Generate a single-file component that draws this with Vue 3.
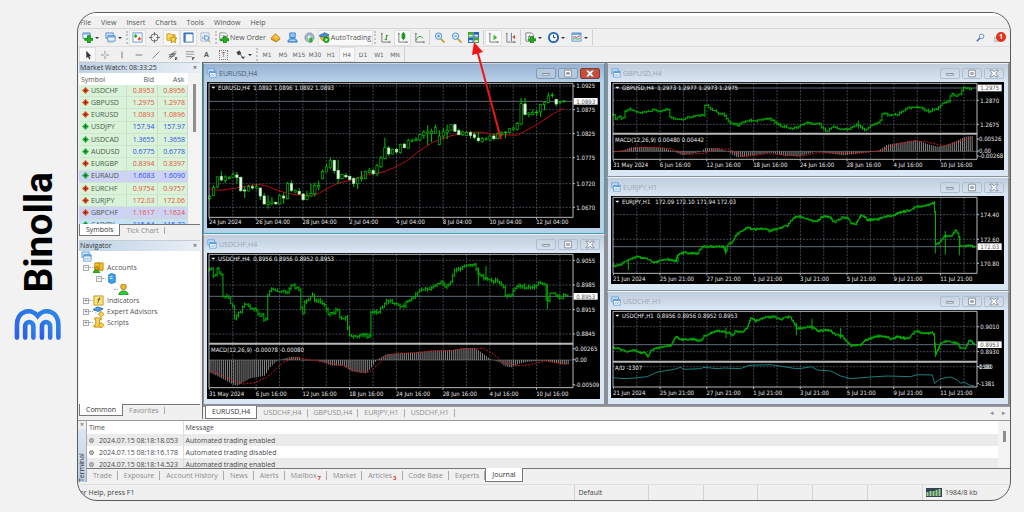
<script setup>
import { h } from 'vue'

/* ---------- icons: [path, fill, stroke] on a 12 x 12 grid ---------- */
const G = '#22b422'
const icons = {
  newChart: [['M1 1h8v6H1z', '#fff', '#5b8fd0'], ['M1 1h8v2H1z', '#7fb0e6', 'none'], ['M6 4h3v3h3v2H9v3H6V9H3V7h3z', G, '#128a12']],
  profiles: [['M1 1h8v6H1z', '#cfe2f7', '#5b8fd0'], ['M3 4h8v6H3z', '#eaf3fc', '#5b8fd0'], ['M3 4h8v2H3z', '#6aa3e0', 'none'], ['M2 11h7', 'none', '#9bb']],
  market: [['M1 1h10v10H1z', '#fff', '#5b8fd0'], ['M4 2l2 2.500-2 2-2-2z', '#16b016', 'none'], ['M8 5l2 2.500-2 2-2-2z', '#f04a2a', 'none']],
  target: [['M6 2a4 4 0 1 1 0 8a4 4 0 1 1 0-8z', 'none', '#666'], ['M6 0v4M6 8v4M0 6h4M8 6h4', 'none', '#666']],
  navigator: [['M1 2h4l1 1h4v6H1z', '#ffd860', '#c79a20'], ['M8 4l1 2.500 3 .2-2.200 2 .7 3L8 10.200 5.500 11.700l.7-3L4 6.700l3-.2z', '#ffe04a', '#b98a10']],
  terminal: [['M1 1h10v10H1z', '#fff', '#3f78c4'], ['M1 1h2v10H1z', '#3f78c4', 'none'], ['M1 1h10v1.500H1z', '#3f78c4', 'none']],
  tester: [['M1 1h9v9H1z', '#eef3f8', '#a9b8c8'], ['M3 8V5M5 8V3M7 8V5', 'none', '#7d9ac0'], ['M7 4a2.500 2.500 0 1 1 0 5a2.500 2.500 0 1 1 0-5z', '#cfe6fb', '#5b8fd0'], ['M9 9l2.500 2.500', 'none', '#c79a20']],
  order: [['M2 1h6l2 2v6H2z', '#fff', '#8a8a8a'], ['M4 4h4M4 6h3', 'none', '#999'], ['M6 5h3v2.500h3v2H9V12H6V9.500H3v-2h3z', G, '#128a12']],
  gold: [['M1 7l5-5 5 5-4 3z', '#f3b52c', '#b67a10'], ['M1 7l6 3v1.500L1 8.500zM11 7v1.500L7 11.500', '#c88718', 'none'], ['M5 4l4 3', 'none', '#ffe9a0']],
  user: [['M3 1h6v5H3z', '#8fc4f5', '#3b84cf'], ['M1 11c0-3 2-4 5-4s5 1 5 4z', '#5aa7ee', '#2f74bd'], ['M3 9h6', 'none', '#d8ecff']],
  signal: [['M6 1a5 5 0 1 1 0 10a5 5 0 1 1 0-10z', '#b8c2cc', '#8793a0'], ['M6 3a3 3 0 1 1 0 6a3 3 0 1 1 0-6z', '#e8eef4', '#6f8fb5'], ['M6 6h3v5.500H6z', G, 'none']],
  auto: [['M1 5l5-4 5 4-2 4H3z', '#f1c232', '#b98a10'], ['M0 4l6-3 5 2-5 3z', '#4a90d9', '#2f6cb0'], ['M8 5.500a3 3 0 1 1 0 6a3 3 0 1 1 0-6z', G, '#0c8a0c'], ['M7 7l3 1.500-3 1.500z', '#fff', 'none']],
  bars: [['M2 1v10h10M1 2h2M10 10v2', 'none', '#777'], ['M7 3v6M7 4h2M5 8h2', 'none', '#1c9a1c']],
  candles: [['M2 1v10h10M1 2h2M10 10v2', 'none', '#777'], ['M7 0v9M5.500 2h3v5h-3z', '#2fd02f', '#118811']],
  line: [['M2 1v10h10M1 2h2M10 10v2', 'none', '#777'], ['M2 9l3-4 3 0 2 2', 'none', '#2f9a4a']],
  zoomIn: [['M7.500 7.500l4 4', 'none', '#d2a020', 2], ['M5 1a3.500 3.500 0 1 1 0 7a3.500 3.500 0 1 1 0-7z', '#dceefb', '#3f86d0'], ['M5 3v3M3.500 4.500h3', 'none', '#3f86d0']],
  zoomOut: [['M7.500 7.500l4 4', 'none', '#d2a020', 2], ['M5 1a3.500 3.500 0 1 1 0 7a3.500 3.500 0 1 1 0-7z', '#dceefb', '#3f86d0'], ['M3.500 4.500h3', 'none', '#3f86d0']],
  tile: [['M0 0h6v6H0zM6 6h6v6H6z', '#3fa82a', 'none'], ['M6 0h6v6H6zM0 6h6v6H0z', '#2a62c8', 'none'], ['M1 3h4v2H1zM7 3h4v2H7zM1 9h4v2H1zM7 9h4v2H7z', '#e8f4e8', 'none']],
  scroll: [['M2 1v10h10M1 2h2M10 10v2', 'none', '#777'], ['M6 3l4 3-4 3z', '#2fb82f', 'none']],
  shift: [['M2 1v10h10M1 2h2M10 10v2', 'none', '#777'], ['M7 1v9', 'none', '#3f6fb0'], ['M11 3v5L8 5.500z', '#d0481c', 'none']],
  indicator: [['M1 1h6l2 2v7H1z', '#fff', '#777'], ['M3 8c2-1 1-5 3-5M3 5h3', 'none', '#777'], ['M6 5h3v2.500h3v2H9V12H6V9.500H4v-2h2z', G, '#128a12']],
  clock: [['M6 1a5 5 0 1 1 0 10a5 5 0 1 1 0-10z', '#f4faff', '#1d5fb5', 2], ['M6 3v3h2', 'none', '#333']],
  template: [['M1 1h10v9H1z', '#dfeaf7', '#6a93c4'], ['M1 1h10v2H1z', '#6a9bd8', 'none'], ['M2 6l2-1 2 1 4-2', 'none', '#d04a3a'], ['M2 8l3-1 2 1 3-1', 'none', '#3fa84a']],
  cursor: [['M4 1v9l2-2 1.500 3.500 1.500-.7L7.500 7.500H10z', '#333', 'none']],
  cross: [['M6 1v4M6 7v4M1 6h4M7 6h4', 'none', '#888']],
  vline: [['M6 2v8', 'none', '#666']],
  hline: [['M2 6h8', 'none', '#666']],
  trend: [['M2 10l8-8', 'none', '#666']],
  channel: [['M1 9l8-8M2 11l8-8M1 6l6-1M4 4l5 1M2 8l6-1', 'none', '#555'], ['M11 9H9v3h2M9 10.500h2', 'none', '#444']],
  fibo: [['M1 2h10M1 5h10M1 8h7', 'none', '#888'], ['M9 12V9h2.500M9 10.500h2', 'none', '#444']],
  arrows: [['M1 3l3-2 2 3-3 2z', '#444', '#444'], ['M5 5l3 4', 'none', '#444'], ['M6 8h5l-2.500 3z', '#444', 'none']],
  chart: [['M1 1h8v6H1z', '#cfe2f7', '#5b9be0'], ['M3 4h8v7H3z', '#fff', '#5b9be0'], ['M3 4h8v2H3z', '#5b9be0', 'none'], ['M4 9l2-1 2 1 2-2', 'none', '#5b9be0']],
  accounts: [['M2 1h9v8H2z', '#f2c12a', '#b98a10'], ['M5 1h2v8', 'none', '#b98a10'], ['M4 5a2 2 0 1 1 0 4a2 2 0 1 1 0-4z', '#e8a020', '#9a6a10'], ['M0 12c0-4 7-4 7 0z', '#2fc02f', '#128a12']],
  server: [['M3 2l3-1.500 4 1.500v8l-4 1.500-3-1.500z', '#3fa0ec', '#1f78c8'], ['M4 4h3M4 6h3', 'none', '#d8efff']],
  person: [['M6 0a3 3 0 1 1 0 6a3 3 0 1 1 0-6z', '#f0bc30', '#a07010'], ['M1 12c0-6 10-6 10 0z', '#2fd02f', '#128a12']],
  func: [['M1 1h10v10H1z', '#ffe476', '#b9962a'], ['M5 9l2-6h1M5 5h3', 'none', '#555']],
  expert: [['M0 4l5-3 6 2-5 3z', '#4a9ad9', '#2f6cb0'], ['M2 6c2 3 6 2 7-1v3H3z', '#4a9ad9', 'none'], ['M9 6l3 3-3 3-3-3z', '#ffd83a', '#b98a10']],
  script: [['M2 1h7v2H7v6h2v2H1V9h2V3H2z', '#ffd860', '#b98a10'], ['M9 6l3 3-3 3-3-3z', '#ffd83a', '#b98a10']],
  search: [['M5 7l-4 4', 'none', '#3f68b8', 2], ['M7.500 1.500a3 3 0 1 1 0 6a3 3 0 1 1 0-6z', '#f4f8ff', '#3f68b8']],
}
const Icon = (p) =>
  h('svg', { viewBox: '0 0 12 12', class: 'icon', 'aria-hidden': 'true' },
    icons[p.name].map(([d, fill, stroke, w]) => h('path', { d, fill, stroke, 'stroke-width': w || 1 })))
Icon.props = ['name']

const menus = ['File', 'View', 'Insert', 'Charts', 'Tools', 'Window', 'Help']
const toolbar = [
  { i: 'newChart', t: 'New chart', c: 1 }, { i: 'profiles', t: 'Profiles', c: 1 }, { grip: 1 },
  { i: 'market', t: 'Market Watch', on: 1 }, { i: 'target', t: 'Data Window' }, { i: 'navigator', t: 'Navigator', on: 1 },
  { i: 'terminal', t: 'Terminal', on: 1 }, { i: 'tester', t: 'Strategy Tester' }, { grip: 1 },
  { i: 'order', t: 'New Order', label: 'New Order' }, { i: 'gold', t: 'MetaEditor' }, { i: 'user', t: 'Community' },
  { i: 'signal', t: 'Signals' }, { i: 'auto', t: 'AutoTrading', label: 'AutoTrading', on: 1 }, { grip: 1 },
  { i: 'bars', t: 'Bar chart' }, { i: 'candles', t: 'Candlesticks', on: 1 }, { i: 'line', t: 'Line chart' }, { sep: 1 },
  { i: 'zoomIn', t: 'Zoom in' }, { i: 'zoomOut', t: 'Zoom out' }, { i: 'tile', t: 'Tile windows' }, { sep: 1 },
  { i: 'scroll', t: 'Auto scroll', on: 1 }, { i: 'shift', t: 'Chart shift' }, { sep: 1 },
  { i: 'indicator', t: 'Indicators', c: 1 }, { i: 'clock', t: 'Periods', c: 1 }, { i: 'template', t: 'Templates', c: 1 }, { sep: 1 },
]
const drawTools = [
  { i: 'cursor', t: 'Cursor', on: 1 }, { i: 'cross', t: 'Crosshair' }, { i: 'vline', t: 'Vertical line' },
  { i: 'hline', t: 'Horizontal line' }, { i: 'trend', t: 'Trendline' }, { i: 'channel', t: 'Channel' }, { i: 'fibo', t: 'Fibonacci' },
]
const frames = ['M1', 'M5', 'M15', 'M30', 'H1', 'H4', 'D1', 'W1', 'MN']

const quotes = [
  ['USDCHF', '0.8953', '0.8956', 'down'], ['GBPUSD', '1.2975', '1.2978', 'down'], ['EURUSD', '1.0893', '1.0896', 'down'],
  ['USDJPY', '157.94', '157.97', 'up'], ['USDCAD', '1.3655', '1.3658', 'up'], ['AUDUSD', '0.6775', '0.6778', 'up'],
  ['EURGBP', '0.8394', '0.8397', 'down'], ['EURAUD', '1.6083', '1.6090', 'up', 'violet'], ['EURCHF', '0.9754', '0.9757', 'down'],
  ['EURJPY', '172.03', '172.06', 'down'], ['GBPCHF', '1.1617', '1.1624', 'down', 'violet'], ['CADJPY', '115.64', '115.73', 'up', 'sky'],
]
const tree = [
  { i: 'chart', level: 0 }, { i: 'accounts', t: 'Accounts', level: 1, b: '-' }, { i: 'server', level: 2, b: '-' },
  { i: 'person', level: 3 }, { i: 'func', t: 'Indicators', level: 1, b: '+' },
  { i: 'expert', t: 'Expert Advisors', level: 1, b: '+' }, { i: 'script', t: 'Scripts', level: 1, b: '+' },
]
const logs = [
  ['2024.07.15 08:18:18.053', 'Automated trading enabled'],
  ['2024.07.15 08:18:16.178', 'Automated trading disabled'],
  ['2024.07.15 08:18:14.523', 'Automated trading enabled'],
]
const termTabs = [['Trade'], ['Exposure'], ['Account History'], ['News'], ['Alerts'], ['Mailbox', 7], ['Market'], ['Articles', 3], ['Code Base'], ['Experts'], ['Journal']]
const chartTabs = ['EURUSD,H4', 'USDCHF,H4', 'GBPUSD,H4', 'EURJPY,H1', 'USDCHF,H1']

/* ---------- chart geometry ---------- */
const pairs = (s) => s.trim().split(/\s+/).map((p) => p.split(',').map(Number))
const at = (pts, x) => {
  for (let i = 1; i < pts.length; i++) {
    if (x <= pts[i][0]) {
      const [x0, y0] = pts[i - 1]
      const [x1, y1] = pts[i]
      return y0 + ((x - x0) / (x1 - x0 || 1)) * (y1 - y0)
    }
  }
  return pts[pts.length - 1][1]
}
const random = (seed) => () => ((seed = (seed * 16807) % 2147483647) / 2147483647)
function priceBars(src, step, noise, extra = '') {
  const pts = pairs(src)
  const rnd = random(911)
  let prev = pts[0][1]
  let d = ''
  for (let x = pts[0][0]; x <= pts[pts.length - 1][0]; x += step) {
    const y = at(pts, x) + (rnd() - 0.5) * noise
    const hi = Math.min(prev, y) - rnd() * noise
    const lo = Math.max(prev, y) + rnd() * noise
    d += `M${x.toFixed(1)} ${hi.toFixed(1)}V${lo.toFixed(1)}M${(x - step / 2).toFixed(1)} ${prev.toFixed(1)}H${x.toFixed(1)}M${x.toFixed(1)} ${y.toFixed(1)}h${step / 2}`
    prev = y
  }
  return d + extra
}
function histogram(src, base) {
  const pts = pairs(src)
  let d = ''
  for (let x = 30; x <= 1106; x += 5.84) d += `M${x.toFixed(1)} ${base}V${at(pts, x).toFixed(1)}`
  return d
}

const candleSrc = `400,402,410,415u 370,376,400,402u 343,345,375,378u 327,343,354,358d 340,345,356,363u 342,346,350,352u 330,338,346,348u 330,339,346,364d
343,346,386,390d 372,384,387,408d 368,374,387,388u 367,374,378,383d 366,374,378,382u 377,378,402,414d 393,402,426,427d 400,420,428,440u
405,420,424,430u 418,421,426,426d 398,401,426,428u 392,402,408,425d 360,364,410,412u 355,365,385,390d 383,385,390,392u 378,388,396,400d
393,396,413,416d 386,402,412,415u 365,394,402,404u 362,370,395,404u 356,370,375,385u 322,328,350,352u 305,315,330,332u 286,295,316,322u
293,295,326,335d 293,325,350,365d 335,337,350,352u 333,340,345,347d 340,343,352,356d 345,350,364,375d 345,348,364,381u 327,346,350,358u
326,328,350,352u 318,325,332,334u 320,326,335,340d 305,311,335,343u 282,288,314,318u 227,257,290,292u 252,258,276,282d 260,262,276,277u
258,262,270,275d 245,247,272,275u 245,246,257,260d 230,236,258,260u 230,236,238,240u 225,232,236,238u 215,217,234,236u 205,210,220,230u
190,210,214,250u 200,208,214,240u 188,196,214,215u 205,222,248,250u 198,210,222,232u 188,205,212,232u 187,188,204,206u 185,188,208,210d
200,206,218,220d 206,210,218,222u 208,212,220,222u 206,212,220,230d 210,218,226,232d 210,228,236,242d 225,230,238,242u 226,230,233,236u
220,222,234,236u 215,222,230,236d 212,216,230,232u 208,212,216,222u 208,210,212,228u 198,200,212,214u 194,198,202,205u 180,184,202,206u
108,125,186,190u 108,126,157,160d 150,153,158,166u 143,152,158,160u 145,150,152,162u 125,128,150,165u 118,122,128,145u 92,102,122,124u
92,99,101,108u 110,112,126,134d 118,119,122,126u 114,117,119,122u`
const candles = candleSrc.split(/\s+/).map((s, i) => {
  const [hi, top, bot, lo] = s.slice(0, -1).split(',').map(Number)
  return { x: 29 + i * 11.68, hi, top, bot, lo, down: s.endsWith('d') }
})

const h4Dates = ['31 May 2024', '6 Jun 16:00', '12 Jun 16:00', '18 Jun 16:00', '24 Jun 16:00', '28 Jun 16:00', '4 Jul 16:00', '10 Jul 16:00']
const h1Dates = ['21 Jun 2024', '25 Jun 21:00', '27 Jun 21:00', '1 Jul 21:00', '3 Jul 21:00', '5 Jul 21:00', '9 Jul 21:00', '11 Jul 21:00']
const gridX = Array.from({ length: 15 }, (_, i) => 98.5 + i * 70.1)

const windows = [
  [
    {
      name: 'EURUSD,H4', ohlc: '1.0892 1.0896 1.0892 1.0893', ohlcX: 160, active: true, y0: 60, h: 438, top: 64, bottom: 466, dateY: 487,
      dates: ['24 Jun 2024', '26 Jun 04:00', '28 Jun 04:00', '2 Jul 04:00', '4 Jul 04:00', '8 Jul 04:00', '10 Jul 04:00', '12 Jul 04:00'],
      rows: [[72, '1.0925'], [143, '1.0875'], [215, '1.0825'], [287, '1.0775'], [365, '1.0720'], [436, '1.0670']],
      price: [118, '1.0893'], candles,
      ma: '28,381 60,385 98,380 140,372 175,367 200,372 240,388 280,397 330,401 355,395 385,378 415,363 450,355 500,338 550,330 580,318 618,298 660,265 700,240 750,222 800,212 840,210 880,217 950,220 970,210 1010,188 1060,155 1091,139',
    },
    {
      name: 'USDCHF,H4', ohlc: '0.8956 0.8956 0.8952 0.8953', ohlcX: 160, y0: 57, h: 438, top: 61, bottom: 461, split: 329, dateY: 485, dates: h4Dates,
      rows: [[79, '0.9055'], [153, '0.8985'], [227, '0.8915'], [300, '0.8845']], price: [187, '0.8953'],
      sub: 'MACD(12,26,9) -0.00078 -0.00080', subY: 353, subRows: [[344, '0.00265'], [377, '0.00'], [452, '-0.00509']], base: 378,
      bars: priceBars('28,110 34,100 40,125 46,122 52,105 58,120 64,125 66,185 84,185 90,210 98,215 100,245 105,255 112,240 122,235 130,215 138,208 146,222 155,225 162,225 170,230 176,250 184,240 192,255 198,250 200,190 206,175 214,165 226,170 240,170 262,172 276,152 286,160 298,165 304,240 308,240 312,205 330,190 338,180 346,205 360,200 370,210 378,225 384,240 398,238 412,225 420,250 428,255 438,250 446,300 456,310 480,302 508,308 510,235 530,232 545,225 558,200 575,205 590,208 598,215 610,220 622,200 640,190 655,175 665,165 690,168 705,150 725,145 735,158 755,140 765,105 785,100 800,92 825,95 835,125 850,130 870,140 890,140 908,155 915,185 930,185 945,165 960,155 985,162 1000,160 1015,145 1035,150 1040,210 1045,200 1050,180 1070,180 1082,195 1095,180 1105,185', 5.84, 8, 'M858 96V135M835 100V155M1042 150V226'),
      hist: histogram('28,415 50,425 70,435 100,452 112,455 130,445 150,433 180,428 195,425 210,400 230,382 245,376 275,368 300,370 305,380 350,378 395,395 430,395 455,412 500,418 515,400 530,378 560,360 600,358 650,355 700,350 760,348 790,342 825,342 845,355 870,375 900,385 915,397 935,400 960,388 985,383 1035,380 1060,385 1090,392 1105,390', 378),
      signal: '28,408 60,422 100,440 130,450 160,447 200,430 220,413 250,385 290,370 330,378 370,383 430,395 480,415 510,413 530,395 560,367 590,358 640,357 700,350 750,350 800,343 850,343 880,360 910,385 950,395 985,393 1035,381 1070,386 1105,391',
    },
  ],
  [
    {
      name: 'GBPUSD,H4', ohlc: '1.2973 1.2977 1.2973 1.2975', ohlcX: 160, y0: 60, h: 264, top: 64, bottom: 292, split: 215, dateY: 315, dates: h4Dates,
      rows: [[115, '1.2870'], [187, '1.2675']], price: [78, '1.2975'],
      sub: 'MACD(12,26,9) 0.00480 0.00442', subY: 239, subRows: [[231, '0.00526'], [267, '0.00'], [282, '-0.00268']], base: 268,
      bars: priceBars('28,160 34,170 44,160 54,178 62,150 74,138 88,148 110,152 130,150 150,143 165,150 192,140 198,165 215,172 235,172 250,165 270,162 298,158 304,122 315,138 330,145 345,155 362,160 374,182 390,186 405,190 415,180 440,174 455,178 475,170 500,172 518,185 535,192 555,200 575,198 585,190 605,182 620,185 645,184 655,200 668,208 685,195 705,200 730,203 745,192 765,190 785,205 800,188 825,183 835,155 860,160 885,155 905,140 930,135 945,138 975,148 1000,140 1012,125 1035,115 1040,92 1055,105 1065,98 1078,75 1090,80 1105,80', 5.84, 5, 'M763 175V200'),
      hist: histogram('28,270 60,265 80,256 120,254 180,258 205,266 235,280 290,270 305,258 340,258 370,268 400,286 430,282 500,272 545,282 590,282 640,268 660,272 720,280 780,272 820,268 850,248 900,240 935,234 970,246 1000,254 1030,248 1060,236 1085,224 1105,222', 268),
      signal: '28,270 70,265 100,257 150,256 200,260 250,277 300,274 340,260 375,262 420,284 490,275 540,278 590,284 640,272 720,274 780,272 830,266 870,248 930,237 970,240 1020,252 1060,240 1105,226',
    },
    {
      name: 'EURJPY,H1', ohlc: '172.09 172.10 171.94 172.03', ohlcX: 154, y0: 60, h: 264, top: 64, bottom: 292, dateY: 315, dates: h1Dates,
      rows: [[116, '174.40'], [190, '172.60'], [262, '170.80']], price: [212, '172.03'],
      bars: priceBars('28,270 45,268 65,255 73,252 98,242 115,245 135,250 150,260 170,252 190,250 215,255 222,235 240,228 255,232 280,232 295,212 330,212 355,212 365,230 370,205 382,200 400,172 430,155 445,160 480,158 495,165 520,158 550,148 570,122 590,122 610,130 635,138 655,122 675,122 690,140 715,125 730,125 740,142 755,145 770,115 790,132 820,130 840,122 865,118 890,108 920,102 935,92 960,90 985,82 991,80 994,205 1005,200 1020,180 1040,180 1055,162 1064,178 1068,212 1095,208 1112,215', 2.92, 4, 'M73 252V283M365 212V236M994 200V232M1024 165V236M1066 180V238M222 235V260'),
    },
    {
      name: 'USDCHF,H1', ohlc: '0.8956 0.8956 0.8952 0.8953', ohlcX: 158, y0: 402, h: 264, top: 406, bottom: 633, split: 557, dateY: 656, dates: h1Dates,
      rows: [[452, '0.9010'], [527, '0.8930']], price: [506, '0.8953'],
      sub: 'A/D -1307', subY: 581, subRows: [[572, '1580'], [572, '0.00'], [622, '-1381']], subGrid: 572,
      bars: priceBars('28,515 50,520 70,528 90,522 105,530 120,528 130,542 140,522 160,515 200,508 215,482 228,490 270,490 290,495 300,480 335,465 375,470 385,478 395,465 415,468 430,455 440,425 455,435 480,425 510,422 530,430 555,420 570,440 578,458 600,455 622,452 640,465 675,462 690,475 715,482 740,510 770,505 785,492 820,480 845,482 860,488 880,482 910,488 935,465 960,472 988,470 994,535 1010,500 1030,495 1060,502 1070,518 1085,515 1095,492 1112,508', 2.92, 4, 'M624 428V462M577 440V478M710 456V488M366 455V486M994 500V543'),
      ad: '28,605 60,608 90,606 130,602 160,588 210,580 230,574 240,580 290,578 300,574 340,578 360,576 410,578 435,568 500,566 540,572 575,578 600,576 622,572 640,582 680,585 710,600 740,608 800,603 850,600 920,602 940,596 985,597 992,622 1010,608 1040,603 1060,612 1070,622 1080,618 1095,627 1112,630',
    },
  ],
]
</script>

<template>
  <div class="page">
    <div class="brand">
      <span class="brand-name">Binolla</span>
      <svg class="brand-mark" viewBox="40 447 146 96" aria-hidden="true">
        <defs>
          <linearGradient id="mark" x1="0" y1="1" x2="1" y2="0">
            <stop offset="0" stop-color="#2f5fe8" />
            <stop offset="1" stop-color="#2b86e6" />
          </linearGradient>
        </defs>
        <g fill="none" stroke="url(#mark)" stroke-width="14" stroke-linecap="round">
          <path d="M49 534V496C49 452 92 442 112 468C132 442 175 452 175 496V534" />
          <path d="M74 534V500C74 482 99 482 99 500V534" />
          <path d="M125 534V500C125 482 150 482 150 500V534" />
        </g>
      </svg>
    </div>

    <main class="frame">
      <nav class="menubar">
        <button v-for="m in menus" :key="m" type="button">{{ m }}</button>
      </nav>

      <div class="toolbar main-tools">
        <template v-for="(b, n) in toolbar" :key="n">
          <i v-if="b.grip" class="grip"></i>
          <i v-else-if="b.sep" class="sep"></i>
          <button v-else type="button" class="tool" :class="{ on: b.on, wide: b.c, labelled: b.label }" :aria-label="b.t">
            <Icon :name="b.i" /><span v-if="b.label">{{ b.label }}</span><i v-if="b.c" class="caret"></i>
          </button>
        </template>
        <div class="tool-end">
          <button type="button" class="tool" aria-label="Search"><Icon name="search" /></button>
          <button type="button" class="tool bell" aria-label="Notifications">
            <svg class="icon" viewBox="0 0 12 12" aria-hidden="true"><path d="M0 6h8v5H5l-2 1v-1H0z" fill="#ddd" stroke="#aaa" /></svg>
            <b>1</b>
          </button>
        </div>
      </div>

      <div class="toolbar draw-tools">
        <button v-for="b in drawTools" :key="b.i" type="button" class="tool" :class="{ on: b.on }" :aria-label="b.t"><Icon :name="b.i" /></button>
        <button type="button" class="tool letter">A</button>
        <button type="button" class="tool letter"><span class="boxed">T</span></button>
        <button type="button" class="tool wide" aria-label="Arrows"><Icon name="arrows" /><i class="caret"></i></button>
        <i class="grip"></i>
        <button v-for="f in frames" :key="f" type="button" class="tool period" :class="{ on: f === 'H4' }">{{ f }}</button>
        <i class="sep"></i>
      </div>

      <div class="body">
        <aside class="side">
          <section class="panel">
            <header class="panel-title"><span>Market Watch: 08:33:25</span><button type="button" aria-label="Close Market Watch">×</button></header>
            <div class="quotes">
              <div class="quote-clip">
                <table class="quote-table">
                  <thead><tr><th>Symbol</th><th>Bid</th><th>Ask</th></tr></thead>
                  <tbody>
                    <tr v-for="q in quotes" :key="q[0]" :class="[q[3], q[4]]">
                      <td>
                        <svg viewBox="0 0 8 8" class="dir" aria-hidden="true"><path d="M4 0l4 4-4 4-4-4z" /><path d="M4 2v4M2 4h4" class="plus" /></svg>{{ q[0] }}
                      </td>
                      <td>{{ q[1] }}</td><td>{{ q[2] }}</td>
                    </tr>
                  </tbody>
                </table>
              </div>
              <div class="track"><i></i></div>
            </div>
            <div class="tabs"><button type="button" class="on">Symbols</button><button type="button">Tick Chart</button></div>
          </section>
          <section class="panel nav-panel">
            <header class="panel-title"><span>Navigator</span><button type="button" aria-label="Close Navigator">×</button></header>
            <ul class="tree">
              <li v-for="t in tree" :key="t.i" :class="'level' + t.level">
                <i v-if="t.b" class="expander">{{ t.b === '+' ? '+' : '−' }}</i><i v-if="t.level" class="branch"></i><Icon :name="t.i" /><span>{{ t.t }}</span>
              </li>
            </ul>
            <div class="tabs"><button type="button" class="on">Common</button><button type="button">Favorites</button></div>
          </section>
        </aside>

        <div class="workspace">
          <div class="mdi">
            <div v-for="(col, c) in windows" :key="c" class="mdi-col">
              <section v-for="w in col" :key="w.name" class="win" :class="{ active: w.active }">
                <header>
                  <Icon name="chart" /><h2>{{ w.name }}</h2>
                  <button type="button" aria-label="Minimize"><svg viewBox="0 0 12 8"><path d="M2 4h8v2H2z" /></svg></button>
                  <button type="button" aria-label="Maximize"><svg viewBox="0 0 12 8"><path d="M2 0h8v8H2zM4.500 3h3v2h-3z" fill-rule="evenodd" /></svg></button>
                  <button type="button" class="close" aria-label="Close"><svg viewBox="0 0 12 8"><path d="M1 0h3l2 2 2-2h3L8 4l3 4H8L6 6 4 8H1l3-4z" /></svg></button>
                </header>
                <svg class="plot" :viewBox="`21 ${w.y0} 1179 ${w.h}`" role="img" :aria-label="w.name + ' chart'">
                  <rect x="21" :y="w.y0" width="1179" :height="w.h" fill="#000" />
                  <g class="grid">
                    <path v-for="x in gridX" :key="x" :d="`M${x} ${w.top}V${w.bottom}`" />
                    <path v-for="r in w.rows" :key="r[1]" :d="`M27 ${r[0]}H1119`" />
                    <path v-if="w.subGrid" :d="`M27 ${w.subGrid}H1119`" />
                  </g>
                  <path class="price-line" :d="`M27 ${w.price[0]}H1119`" />
                  <path v-if="w.base" class="base" :d="`M27 ${w.base}H1119`" />
                  <path v-if="w.hist" class="hist" :d="w.hist" />
                  <polyline v-if="w.signal" class="signal" :points="w.signal" />
                  <polyline v-if="w.ad" class="ad" :points="w.ad" />
                  <polyline v-if="w.ma" class="ma" :points="w.ma" />
                  <path v-if="w.bars" class="bars" :d="w.bars" />
                  <g v-for="k in w.candles || []" :key="k.x" class="candle" :class="{ down: k.down }">
                    <path :d="`M${k.x} ${k.hi}V${k.lo}`" />
                    <rect :x="k.x - 3.5" :y="k.top" width="7" :height="k.bot - k.top" />
                  </g>
                  <path class="edge" :d="`M27 ${w.top}H1119V${w.bottom}H27z`" />
                  <path v-if="w.split" class="split" :d="`M27 ${w.split}H1119`" />
                  <path class="edge" :d="[...w.rows, ...(w.subRows || [])].map((r) => `M1119 ${r[0]}h6`).join('')" />
                  <path class="edge" :d="w.dates.map((d, n) => `M${28 + n * 140.2} ${w.bottom}v6`).join('')" />
                  <path d="M34 0h12l-6 6z" fill="#fff" :transform="`translate(0 ${w.top + 10})`" />
                  <text x="54" :y="w.top + 20">{{ w.name }}</text>
                  <text :x="w.ohlcX" :y="w.top + 20">{{ w.ohlc }}</text>
                  <text v-if="w.sub" x="33" :y="w.subY">{{ w.sub }}</text>
                  <text v-for="r in w.rows" :key="r[1]" x="1129" :y="r[0] + 7">{{ r[1] }}</text>
                  <text v-for="r in w.subRows || []" :key="r[1]" x="1125" :y="r[0] + 7">{{ r[1] }}</text>
                  <text v-for="(d, n) in w.dates" :key="d" :x="27 + n * 140.2" :y="w.dateY">{{ d }}</text>
                  <rect x="1121" :y="w.price[0] - 10" width="72" height="20" fill="#fff" />
                  <text class="price-tag" x="1129" :y="w.price[0] + 7">{{ w.price[1] }}</text>
                </svg>
              </section>
            </div>
          </div>
          <div class="tabs chart-tabs">
            <button v-for="(t, n) in chartTabs" :key="t" type="button" :class="{ on: n === 0 }">{{ t }}</button>
            <div class="tab-arrows"><button type="button" aria-label="Previous tab">◂</button><button type="button" aria-label="Next tab">▸</button></div>
          </div>
        </div>
      </div>

      <section class="terminal">
        <div class="rail"><button type="button" aria-label="Close Terminal">×</button><span>Terminal</span></div>
        <div class="terminal-main">
          <div class="log-clip">
            <table class="log">
              <thead><tr><th>Time</th><th>Message</th></tr></thead>
              <tbody>
                <tr v-for="l in logs" :key="l[0]"><td><i class="dot"></i>{{ l[0] }}</td><td>{{ l[1] }}</td></tr>
              </tbody>
            </table>
            <div class="track"><i></i></div>
          </div>
          <div class="tabs term-tabs">
            <button v-for="t in termTabs" :key="t[0]" type="button" :class="{ on: t[0] === 'Journal' }">{{ t[0] }}<sub v-if="t[1]">{{ t[1] }}</sub></button>
          </div>
        </div>
      </section>

      <footer class="status">
        <span class="help">For Help, press F1</span>
        <span class="profile">Default</span>
        <span v-for="n in 5" :key="n" class="cell"></span>
        <span class="traffic">
          <svg viewBox="0 0 16 9" aria-hidden="true"><path d="M0 0h16v9H0z" fill="#345" /><path d="M1.500 4v4M4.500 3v5M7.500 3v5M10.500 2v6M13.500 1v7" stroke="#9bd08a" stroke-width="2" /></svg>
          1984/8 kb
        </span>
      </footer>

      <svg class="pointer" viewBox="0 0 40 104" aria-hidden="true">
        <path d="M9 8L33 97" stroke="#f01414" stroke-width="2" />
        <path d="M6 0l9 10-11 3z" fill="#f01414" />
      </svg>
    </main>
  </div>
</template>

<style>
body { background: #f2f2f2; }
</style>

<style scoped>
* { box-sizing: border-box; }
button { font: inherit; color: inherit; background: none; border: 0; padding: 0; margin: 0; }
i { font-style: normal; }
.page { display: flex; min-height: 100vh; padding: 12px 13px 11px 0; background: #f2f2f2; font: 7px/11px "Open Sans", "Noto Sans", sans-serif; color: #555; }
.brand { flex: none; width: 77px; display: flex; flex-direction: column; align-items: center; padding-top: 160px; gap: 16px; }
.brand-name { writing-mode: vertical-rl; transform: rotate(180deg); font: 700 39px/44px Roboto, sans-serif; color: #000; }
.brand-mark { width: 48px; margin-right: 2px; }
.frame { position: relative; flex: 1; min-width: 0; display: flex; flex-direction: column; background: #f0f0f0; border: 1px solid #5c5c5c; border-radius: 20px; overflow: hidden; }
.icon { display: block; flex: none; width: 11px; height: 11px; }

.menubar { display: flex; gap: 10px; padding: 5px 0 0 2px; border-bottom: 1px solid #d6d6d6; box-shadow: inset 0 3px #fff; }
.menubar button { line-height: 10px; }
.toolbar { display: flex; align-items: center; }
.main-tools { height: 18px; padding-left: 1px; border-bottom: 1px solid #dedede; }
.draw-tools { height: 15px; padding-left: 1px; }
.tool { flex: none; width: 17px; height: 16px; display: flex; align-items: center; justify-content: center; }
.draw-tools .tool { height: 15px; }
.draw-tools .icon { width: 10px; height: 10px; }
.tool.on { background: #f9f9f9; border: 1px solid #e0e0e0; }
.tool.wide { width: 23px; gap: 2px; }
.tool.labelled { width: auto; gap: 1px; padding: 0 1px 0 0; }
.caret { border: 2px solid transparent; border-top-color: #333; border-bottom: 0; }
.grip { flex: none; width: 2px; height: 13px; margin: 0 1px; border-left: 2px dotted #c4c4c4; }
.sep { flex: none; width: 1px; height: 15px; margin: 0 1px; background: #d0d0d0; }
.letter { font-weight: 700; }
.boxed { border: 1px dotted #777; line-height: 8px; padding: 0 2px; font-weight: 400; }
.draw-tools .period { width: 16px; font: 6px/8px "DejaVu Sans", sans-serif; color: #666; }
.tool-end { margin-left: auto; display: flex; padding-right: 3px; gap: 1px; }
.tool-end .icon { width: 9px; height: 9px; }
.bell { position: relative; }
.bell b { position: absolute; left: 6px; top: 2px; width: 10px; height: 10px; border-radius: 50%; background: #e2321c; color: #fff; line-height: 10px; }

.body { display: flex; }
.side { flex: none; width: 124px; display: flex; flex-direction: column; gap: 4px; padding: 0 2px 3px 1px; }
.panel { display: flex; flex-direction: column; }
.nav-panel { flex: 1; }
.panel-title { display: flex; justify-content: space-between; align-items: center; height: 11px; padding: 0 3px 0 1px; background: linear-gradient(90deg, #bdd2e6, #e9eff5); color: #333; line-height: 10px; border-top: 1px solid #c4ccd4; }
.quotes { display: flex; background: #fff; height: 151px; }
.quote-clip { flex: 1; overflow: hidden; }
.quote-table { width: 109px; border-collapse: collapse; table-layout: fixed; height: 159px; }
.quote-table th { font-weight: 400; text-align: right; padding: 0 3px 0 2px; height: 12px; color: #555; }
.quote-table th:first-child { text-align: left; width: 47px; }
.quote-table th:nth-child(2) { width: 31px; }
.quote-table td { padding: 0 2px; text-align: right; background: #d8f3d8; border-bottom: 1px solid #cfe4cf; border-right: 1px solid #cbdccb; line-height: 10px; }
.quote-table td:first-child { text-align: left; color: #4a5a4a; padding-left: 3px; white-space: nowrap; }
.quote-table .violet td { background: #ccd3f6; }
.quote-table .sky td { background: #c4e2fb; }
.down td { color: #e8503a; }
.up td { color: #2f50e8; }
.dir { width: 7px; height: 7px; margin-right: 2px; vertical-align: -1px; fill: #e8502a; }
.up .dir { fill: #2fb84a; }
.dir .plus { stroke: #7a2a10; fill: none; }
.up .dir .plus { stroke: #0d6a20; }
.track { flex: none; width: 12px; background: #f3f3f3; display: flex; justify-content: center; }
.track i { width: 3px; background: #8e8e8e; }
.quotes .track i { height: 48px; margin-top: 11px; }
.tabs { display: flex; align-items: stretch; height: 12px; border-top: 1px solid #777; color: #8c8c8c; }
.tabs button { position: relative; padding: 0 6px; line-height: 10px; white-space: nowrap; }
.tabs > button:not(.on)::after { content: ""; position: absolute; right: 0; top: 2px; bottom: 2px; width: 1px; background: #aaa; }
.tabs .on { background: #fff; color: #333; border: 1px solid #777; border-top: 0; margin-top: -1px; }
.tree { flex: 1; margin: 0; padding: 0; list-style: none; background: #fff; }
.tree li { display: flex; align-items: center; height: 11px; color: #555; }
.tree span { margin-left: 3px; }
.level0 { padding-left: 2px; }
.level1 { padding-left: 4px; }
.level2 { padding-left: 17px; }
.level3 { padding-left: 35px; }
.expander { width: 6px; height: 6px; border: 1px solid #aaa; font-size: 6px; line-height: 4px; text-align: center; color: #335; background: #fff; }
.branch { width: 4px; border-top: 1px dotted #aaa; }

.workspace { flex: 1; min-width: 0; border-left: 1px solid #6e6e6e; }
.mdi { display: grid; grid-template-columns: 1fr 1fr; gap: 2px; padding: 0 1px 1px 0; border-top: 1px solid #6e6e6e; background: #8a8f94; }
.mdi-col { display: flex; flex-direction: column; justify-content: space-between; min-width: 0; }
.win { border: 1px solid #8a9099; border-top-color: #eef3f8; background: linear-gradient(#bfcddc, #d9e6f3 18px); padding: 0 4px 6px 3px; }
.mdi-col:first-child .win { padding-bottom: 5px; }
.win.active { border-color: #3f9db0; border-top-color: #c8d8ea; background: linear-gradient(#98b2d0, #b7d0ea 18px); }
.win header { display: flex; align-items: center; gap: 2px; height: 18px; color: #9ba5af; }
.win h2 { flex: 1; margin: 0; font: inherit; }
.win.active header { color: #4c5d74; }
.win .icon { width: 10px; height: 10px; }
.win header button { width: 20px; height: 11px; display: flex; align-items: center; justify-content: center; border: 1px solid #b0bfce; border-radius: 2px; }
.win header button svg { width: 10px; height: 7px; fill: #fff; stroke: #7a828c; overflow: visible; }
.win.active header button { border-color: #8499b4; background: #b4c8de; }
.win.active header .close { background: #cf4a34; border-color: #7c3a38; }
.plot { display: block; width: 100%; height: auto; }
.plot text { font: 18px "DejaVu Sans Condensed", "DejaVu Sans", sans-serif; fill: #e8e8e8; }
.plot .price-tag { fill: #555; }
.grid path { stroke: #5f6d7c; stroke-width: 2; stroke-dasharray: 6 4; fill: none; }
.price-line { stroke: #5f6b7a; stroke-width: 3; }
.base { stroke: #777; stroke-width: 2; }
.hist { stroke: #858585; stroke-width: 3; fill: none; }
.signal { stroke: #d01818; stroke-width: 3; stroke-dasharray: 6 4; fill: none; }
.ma { stroke: #b80a0a; stroke-width: 3; fill: none; }
.ad { stroke: #1a7f7c; stroke-width: 3; fill: none; }
.bars { stroke: #00b400; stroke-width: 3; fill: none; }
.candle path { stroke: #00c400; stroke-width: 3; }
.candle rect { stroke: #00c400; stroke-width: 2; fill: #000; }
.candle.down rect { fill: #e4f8e4; stroke: #a4e8a4; }
.edge { stroke: #b8b8b8; stroke-width: 3; fill: none; }
.split { stroke: #b8b8b8; stroke-width: 6; }
.chart-tabs { height: 13px; padding-left: 2px; border-top: 1px solid #999; background: #f0f0f0; }
.tab-arrows { margin-left: auto; display: flex; }
.tab-arrows button { padding: 0 4px; }

.terminal { display: flex; margin-top: 1px; border-top: 1px solid #999; }
.rail { flex: none; width: 8px; display: flex; flex-direction: column; align-items: center; gap: 1px; }
.rail button { line-height: 7px; }
.rail span { flex: 1; width: 8px; writing-mode: vertical-rl; transform: rotate(180deg); line-height: 8px; text-align: left; background: linear-gradient(#bcd0e4, #dbe7f2); color: #333; }
.terminal-main { flex: 1; min-width: 0; border-left: 1px solid #aaa; }
.log-clip { display: flex; height: 47px; overflow: hidden; background: #fff; }
.log { flex: 1; border-collapse: collapse; table-layout: fixed; height: 49px; color: #4a4a4a; }
.log th { font-weight: 400; text-align: left; height: 13px; padding: 0 2px; }
.log td { height: 12px; padding: 0 2px; line-height: 11px; }
.log th:first-child { width: 96px; }
.log th:first-child, .log td:first-child { border-right: 1px solid #ddd; }
.log tbody tr:nth-child(odd) td { background: #ebebeb; }
.dot { display: inline-block; width: 5px; height: 5px; margin-right: 5px; border: 1px solid #888; border-radius: 50%; background: #bbb; }
.log-clip .track i { height: 11px; margin-top: 10px; }
.term-tabs { height: 14px; }
.term-tabs button { padding: 0 6px; line-height: 12px; }
.term-tabs sub { font-size: 6px; line-height: 0; color: #e8322a; font-weight: 700; margin-left: 1px; }

.status { flex: 1; display: flex; align-items: stretch; margin-top: 2px; border-top: 1px solid #ddd; line-height: 15px; color: #444; }
.status span { padding-left: 3px; border-left: 1px solid #d4d4d4; }
.status .help { flex: 508; padding: 0; border: 0; text-indent: -2px; }
.status .profile { flex: 71; }
.status .cell { flex: 52; }
.status .traffic { flex: 86; display: flex; align-items: center; gap: 3px; white-space: nowrap; }
.traffic svg { width: 16px; height: 9px; }
.pointer { position: absolute; left: 390px; top: 29px; width: 40px; height: 104px; pointer-events: none; }
</style>
